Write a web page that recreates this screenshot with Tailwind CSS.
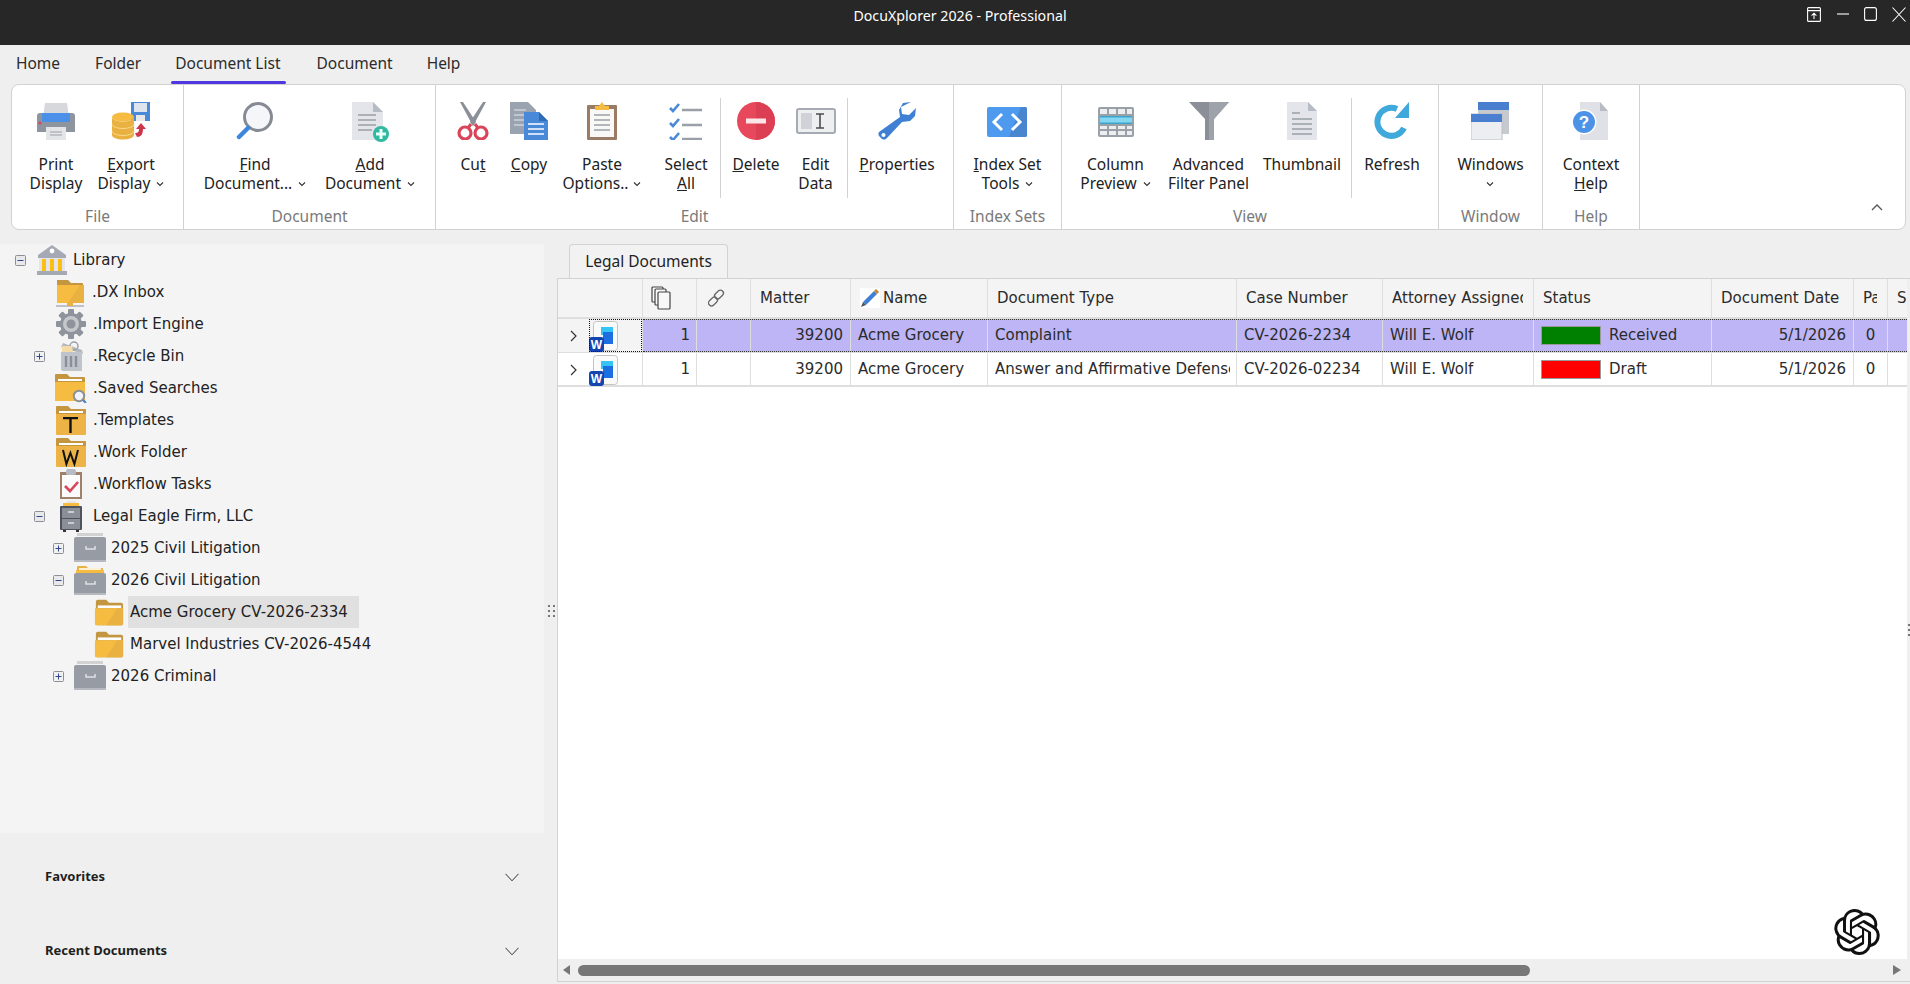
<!DOCTYPE html>
<html lang="en">
<head>
<meta charset="UTF-8">
<title>DocuXplorer 2026 - Professional</title>
<script src="https://cdn.jsdelivr.net/npm/@tailwindcss/browser@4"></script>
</head>
<body class="relative w-[1910px] h-[984px] overflow-hidden bg-[#efefef] font-['Noto_Sans',sans-serif] text-[14px] text-[#1f1f1f]">

<svg class="hidden">
  <symbol id="folder" viewBox="0 0 32 32">
    <path d="M2 5a2 2 0 0 1 2-2h9l3 3h13a2 2 0 0 1 2 2v20a2 2 0 0 1-2 2H3a2 2 0 0 1-1-2z" fill="#c4963f"/>
    <rect x="4" y="9" width="25" height="3" fill="#fff"/>
    <path d="M1 12h30v17a1 1 0 0 1-1 1H2a1 1 0 0 1-1-1z" fill="#f6bc42"/>
    <path d="M31 12v17a1 1 0 0 1-1 1H13L25 12z" fill="#e8b142"/>
  </symbol>
  <symbol id="drawer" viewBox="0 0 32 32">
    <rect x="3" y="1" width="26" height="3" fill="#d2d2d2"/>
    <rect x="0" y="5" width="32" height="25" rx="2" fill="#969ba4"/>
    <rect x="0" y="28" width="32" height="2" fill="#b6bac0"/>
    <path d="M12 14v3h9v-3" fill="none" stroke="#dfe1e4" stroke-width="1.5"/>
  </symbol>
  <symbol id="word" viewBox="0 0 30 32">
    <rect x="4.500" y="1.500" width="24" height="29" rx="3" fill="#fafafa" stroke="#c4c4c4"/>
    <rect x="12" y="7" width="12" height="8" fill="#36c3f5"/>
    <rect x="14" y="12" width="10" height="12" fill="#1b6fe0"/>
    <rect x="0" y="17" width="15" height="15" rx="3" fill="#1444b0"/>
    <text x="7.500" y="29" text-anchor="middle" font-family="Liberation Sans" font-weight="700" font-size="12" fill="#fff">W</text>
  </symbol>
  <symbol id="plus" viewBox="0 0 11 11">
    <rect x=".5" y=".5" width="10" height="10" rx="1" fill="#f1f1f3" stroke="#8e8e96"/>
    <path d="M2.5 5.5h6M5.5 2.5v6" stroke="#2f4a8c"/>
  </symbol>
  <symbol id="minus" viewBox="0 0 11 11">
    <rect x=".5" y=".5" width="10" height="10" rx="1" fill="#e9e9ec" stroke="#8e8e96"/>
    <path d="M2.5 5.5h6" stroke="#2f4a8c"/>
  </symbol>
  <symbol id="chev" viewBox="0 0 8 6">
    <path d="M1 1.5 4 4.5 7 1.5" fill="none" stroke="#333" stroke-width="1.1"/>
  </symbol>
</svg>

<!-- title bar -->
<div class="h-[45px] bg-[#272727] relative flex justify-center pl-[10px] pt-[6px] text-white text-[14.2px] leading-[20px]">
  <span>DocuXplorer 2026 - Professional</span>
  <div class="absolute right-0 top-0 h-[28px] w-[110px] flex items-center">
    <svg class="ml-[7px]" width="14" height="15" viewBox="0 0 14 15" fill="none" stroke="#fff" stroke-width="1.1"><rect x=".6" y=".6" width="12.8" height="13.8" rx="1"/><path d="M.6 3.6h12.8M7 12V6.5M4.6 8.6 7 6.2l2.4 2.4"/></svg>
    <svg class="ml-[15px]" width="14" height="14" viewBox="0 0 14 14" stroke="#fff" stroke-width="1.1"><path d="M1 7h12"/></svg>
    <svg class="ml-[14px]" width="13" height="14" viewBox="0 0 13 14" fill="none" stroke="#fff" stroke-width="1.1"><rect x=".6" y=".6" width="11.8" height="12.8" rx="2"/></svg>
    <svg class="ml-[15px]" width="14" height="15" viewBox="0 0 14 15" stroke="#fff" stroke-width="1.1"><path d="M.5.5 13.5 14.5M13.5.5.5 14.5"/></svg>
  </div>
</div>

<!-- menu tabs -->
<div class="h-[39px] relative flex text-[15.5px] leading-[36px] text-[#2b2b2b]">
  <span class="ml-[16px]">Home</span>
  <span class="ml-[35px]">Folder</span>
  <span class="ml-[34px]">Document List</span>
  <span class="ml-[36px]">Document</span>
  <span class="ml-[34px]">Help</span>
  <div class="absolute left-[171px] top-[36px] w-[115px] h-[3px] rounded-sm bg-[#5038e0]"></div>
</div>

<!-- ribbon -->
<div class="relative ml-[11px] w-[1895px] h-[146px] bg-white border border-[#d2d2d2] rounded-[8px] flex text-[15.5px] leading-[19px] text-[#222]">

  <!-- File -->
  <div class="w-[172px] border-r border-[#d2d2d2] flex flex-col">
    <div class="flex h-[122px] pt-[17px]">
      <div class="w-[88px] flex flex-col items-center">
        <svg width="38" height="38" viewBox="0 0 38 38"><path d="M8 1h22l2 14H6z" fill="#d6d8dc"/><path d="M0 14a3 3 0 0 1 3-3h32a3 3 0 0 1 3 3v16H0z" fill="#8f959e"/><path d="M5 11h28v9H5z" fill="#4a90e8"/><circle cx="3" cy="21" r="1.6" fill="#d9455a"/><path d="M9 25h20v13H9z" fill="#e3e5e8"/><path d="M13 30h12M13 33h12" stroke="#9aa0a8"/></svg>
        <div class="mt-[15px] text-center">Print<br>Display</div>
      </div>
      <div class="w-[62px] flex flex-col items-center">
        <svg width="38" height="38" viewBox="0 0 38 38"><rect x="19" y="0" width="19" height="19" fill="#4a88d8"/><rect x="22" y="1" width="13" height="9" fill="#dfe5ee"/><rect x="24" y="13" width="9" height="6" fill="#e8e8e8"/><ellipse cx="11" cy="15" rx="11" ry="4.5" fill="#f6bc42"/><path d="M0 15v18c0 2.500 5 4.500 11 4.500S22 35.500 22 33V15c0 2.500-5 4.500-11 4.500S0 17.500 0 15z" fill="#e8b142"/><path d="M0 22c0 2.500 5 4.500 11 4.500S22 24.500 22 22M0 29c0 2.500 5 4.500 11 4.500S22 31.500 22 29" fill="none" stroke="#f9d98a"/><path d="M25 35c4 0 6-3 6-8h3l-5-6-5 6h3c0 3-1 4-4 4z" fill="#d0364b"/></svg>
        <div class="mt-[15px] text-center whitespace-nowrap"><u>E</u>xport<br>Display <svg class="inline w-[8px] h-[6px] ml-[2px] mb-[2px]"><use href="#chev"/></svg></div>
      </div>
    </div>
    <div class="text-center text-[#7a7a7a] leading-[18px]">File</div>
  </div>

  <!-- Document -->
  <div class="w-[252px] border-r border-[#d2d2d2] flex flex-col">
    <div class="flex h-[122px] pt-[17px]">
      <div class="w-[142px] flex flex-col items-center">
        <svg width="38" height="38" viewBox="0 0 38 38"><circle cx="22" cy="15" r="13.500" fill="#f4f6fa" stroke="#868b93" stroke-width="3"/><path d="M12 26 3 35" stroke="#3d86dd" stroke-width="4.500" stroke-linecap="round"/></svg>
        <div class="mt-[15px] text-center whitespace-nowrap"><u>F</u>ind<br>Document... <svg class="inline w-[8px] h-[6px] ml-[2px] mb-[2px]"><use href="#chev"/></svg></div>
      </div>
      <div class="w-[88px] flex flex-col items-center">
        <svg width="38" height="40" viewBox="0 0 38 40"><path d="M1 0h21l10 10v28H1z" fill="#e3e5ea"/><path d="M22 0l10 10H22z" fill="#b6bbc4"/><path d="M7 13h18M7 18h18M7 23h18M7 28h14" stroke="#9aa0a8" stroke-width="1.500"/><circle cx="30" cy="32" r="8" fill="#30b8a0"/><path d="M30 27v10M25 32h10" stroke="#e8fff9" stroke-width="3"/></svg>
        <div class="mt-[13px] text-center whitespace-nowrap"><u>A</u>dd<br>Document <svg class="inline w-[8px] h-[6px] ml-[2px] mb-[2px]"><use href="#chev"/></svg></div>
      </div>
    </div>
    <div class="text-center text-[#7a7a7a] leading-[18px]">Document</div>
  </div>

  <!-- Edit -->
  <div class="w-[518px] border-r border-[#d2d2d2] flex flex-col">
    <div class="flex h-[122px] pt-[17px]">
      <div class="w-[74px] flex flex-col items-center">
        <svg width="32" height="38" viewBox="0 0 32 38"><path d="M3 0 16 24l3-4L6 0z" fill="#8b9098"/><path d="M29 0 16 24l-3-4L26 0z" fill="#8b9098"/><ellipse cx="8" cy="31" rx="6" ry="6" fill="none" stroke="#d9455a" stroke-width="3.200"/><ellipse cx="24" cy="31" rx="6" ry="6" fill="none" stroke="#d9455a" stroke-width="3.200"/><path d="M11 26l3-4M21 26l-3-4" stroke="#d9455a" stroke-width="3"/></svg>
        <div class="mt-[15px] text-center">Cu<u>t</u></div>
      </div>
      <div class="w-[38px] flex flex-col items-center">
        <svg width="38" height="38" viewBox="0 0 38 38" class="shrink-0"><path d="M0 0h18l8 8v24H0z" fill="#9aa3b0"/><path d="M4 8h12M4 13h12M4 18h12M4 23h12" stroke="#e8eaee"/><path d="M14 10h15l9 9v19H14z" fill="#4a88d8"/><path d="M29 10l9 9h-9z" fill="#2f6bb8"/><path d="M18 22h16M18 27h16M18 32h16" stroke="#cfe1f8" stroke-width="2"/></svg>
        <div class="mt-[15px] text-center"><u>C</u>opy</div>
      </div>
      <div class="w-[108px] flex flex-col items-center">
        <svg width="32" height="38" viewBox="0 0 32 38"><rect x="1" y="3" width="30" height="35" rx="1" fill="#9a7b66"/><rect x="4" y="7" width="24" height="28" fill="#f8f8f6"/><path d="M8 13h16M8 18h16M8 23h16M8 28h16" stroke="#9aa0a8" stroke-width="1.500"/><path d="M9 8V4h4l3-4 3 4h4v4z" fill="#f6bc42"/></svg>
        <div class="mt-[15px] text-center whitespace-nowrap">Paste<br>Options.. <svg class="inline w-[8px] h-[6px] ml-[1px] mb-[2px]"><use href="#chev"/></svg></div>
      </div>
      <div class="w-[60px] flex flex-col items-center">
        <svg width="34" height="38" viewBox="0 0 34 38" fill="none"><path d="M1 6l3 3 6-7M1 21l3 3 6-7M1 35l3 3 6-7" stroke="#4a88d8" stroke-width="2.600"/><path d="M13 8h20M13 23h20M13 37h20" stroke="#9aa0a8" stroke-width="2.400"/></svg>
        <div class="mt-[15px] text-center">Select<br><u>A</u>ll</div>
      </div>
      <div class="w-px h-[100px] -mt-[4px] ml-[4px] bg-[#d2d2d2]"></div>
      <div class="w-[70px] flex flex-col items-center">
        <svg width="38" height="38" viewBox="0 0 38 38"><circle cx="19" cy="19" r="19" fill="#e8485c"/><path d="M19 0a19 19 0 0 1 0 38z" fill="#dc3f53"/><rect x="9" y="16.500" width="20" height="5" fill="#fbe7ea"/></svg>
        <div class="mt-[15px] text-center"><u>D</u>elete</div>
      </div>
      <div class="w-[49px] flex flex-col items-center">
        <svg width="40" height="38" viewBox="0 0 40 38"><rect x="1" y="7" width="38" height="24" rx="2" fill="#eeeff1" stroke="#a6abb3" stroke-width="2"/><rect x="5" y="11" width="11" height="16" fill="#cfd2d7"/><path d="M20 12h8M20 26h8M24 12v14" stroke="#4d4d4d" stroke-width="1.600"/></svg>
        <div class="mt-[15px] text-center">Edit<br>Data</div>
      </div>
      <div class="w-px h-[100px] -mt-[4px] ml-[7px] bg-[#d2d2d2]"></div>
      <div class="w-[98px] flex flex-col items-center">
        <svg width="38" height="38" viewBox="0 0 38 38"><path d="M33 0 25 1 21 8l1 7L1 30a4 4 0 0 0 0 4l3 3a4 4 0 0 0 5-1l15-16 8-1 5-5 1-8-7 7-7-1-1-7z" fill="#3f80d4"/><circle cx="5.500" cy="33" r="2" fill="#fff"/></svg>
        <div class="mt-[15px] text-center"><u>P</u>roperties</div>
      </div>
    </div>
    <div class="text-center text-[#7a7a7a] leading-[18px]">Edit</div>
  </div>

  <!-- Index Sets -->
  <div class="w-[108px] border-r border-[#d2d2d2] flex flex-col">
    <div class="flex h-[122px] pt-[17px] justify-center">
      <div class="flex flex-col items-center">
        <svg class="mt-[5px]" width="40" height="30" viewBox="0 0 40 30"><rect width="40" height="30" rx="2" fill="#4d9aee"/><path d="M22 30 34 0h4a2 2 0 0 1 2 2v26a2 2 0 0 1-2 2z" fill="#4a85cf"/><path d="M15 7 7 15l8 8M25 7l8 8-8 8" fill="none" stroke="#fff" stroke-width="3"/></svg>
        <div class="mt-[18px] text-center whitespace-nowrap"><u>I</u>ndex Set<br>Tools <svg class="inline w-[8px] h-[6px] ml-[2px] mb-[2px]"><use href="#chev"/></svg></div>
      </div>
    </div>
    <div class="text-center text-[#7a7a7a] leading-[18px] whitespace-nowrap">Index Sets</div>
  </div>

  <!-- View -->
  <div class="w-[377px] border-r border-[#d2d2d2] flex flex-col">
    <div class="flex h-[122px] pt-[17px]">
      <div class="w-[107px] flex flex-col items-center">
        <svg class="mt-[5px]" width="36" height="30" viewBox="0 0 36 30"><rect width="36" height="30" rx="2" fill="#9aa0a8"/><path d="M2 2h7v5H2zM11 2h7v5h-7zM20 2h7v5h-7zM29 2h5v5h-5zM2 19h7v3H2zM11 19h7v3h-7zM20 19h7v3h-7zM29 19h5v3h-5zM2 24h7v4H2zM11 24h7v4h-7zM20 24h7v4h-7zM29 24h5v4h-5z" fill="#eceef0"/><rect x="2" y="9" width="32" height="8" fill="#84d6f2"/><path d="M2 9h32v1.500H2zM2 15.500h32V17H2z" fill="#3ba6cc"/></svg>
        <div class="mt-[18px] text-center whitespace-nowrap">Column<br>Preview <svg class="inline w-[8px] h-[6px] ml-[2px] mb-[2px]"><use href="#chev"/></svg></div>
      </div>
      <div class="w-[79px] flex flex-col items-center">
        <svg width="40" height="38" viewBox="0 0 40 38"><path d="M0 0h40L25 17v21h-9V17z" fill="#8b9098"/><path d="M20 0h20L25 17v21h-5z" fill="#9ea3ab"/></svg>
        <div class="mt-[15px] text-center whitespace-nowrap">Advanced<br>Filter Panel</div>
      </div>
      <div class="ml-[5px] w-[98px] flex flex-col items-center">
        <svg width="30" height="38" viewBox="0 0 30 38"><path d="M0 0h21l9 9v29H0z" fill="#e3e5ea"/><path d="M21 0l9 9h-9z" fill="#b6bbc4"/><path d="M5 11h8M5 17h20M5 22h20M5 27h20M5 32h20" stroke="#9aa0a8" stroke-width="1.300"/></svg>
        <div class="mt-[15px] text-center">Thumbnail</div>
      </div>
      <div class="w-px h-[100px] -mt-[4px] bg-[#d2d2d2]"></div>
      <div class="w-[80px] flex flex-col items-center">
        <svg width="38" height="38" viewBox="0 0 38 38"><path d="M31 26a14 14 0 1 1-7-19" fill="none" stroke="#3fa9dc" stroke-width="6"/><path d="M22 16 36 0v16z" fill="#3fa9dc"/></svg>
        <div class="mt-[15px] text-center">Refresh</div>
      </div>
    </div>
    <div class="text-center text-[#7a7a7a] leading-[18px]">View</div>
  </div>

  <!-- Window -->
  <div class="w-[104px] border-r border-[#d2d2d2] flex flex-col">
    <div class="flex h-[122px] pt-[17px] justify-center">
      <div class="flex flex-col items-center">
        <svg width="38" height="38" viewBox="0 0 38 38"><rect x="7" y="0" width="31" height="32" fill="#c6c9ce"/><rect x="7" y="0" width="31" height="8" fill="#4a7fd0"/><rect x="0" y="12" width="31" height="26" fill="#eceef1" stroke="#bcc0c6"/><rect x="0" y="12" width="31" height="8" fill="#4a7fd0"/></svg>
        <div class="mt-[15px] text-center">Windows<br><svg class="inline w-[8px] h-[6px] mb-[2px]"><use href="#chev"/></svg></div>
      </div>
    </div>
    <div class="text-center text-[#7a7a7a] leading-[18px]">Window</div>
  </div>

  <!-- Help -->
  <div class="w-[97px] border-r border-[#d2d2d2] flex flex-col">
    <div class="flex h-[122px] pt-[17px] justify-center">
      <div class="flex flex-col items-center">
        <svg width="38" height="38" viewBox="0 0 38 38"><path d="M8 0h20l8 9v29H8z" fill="#dfe1e6"/><path d="M28 0l8 9h-8z" fill="#b6bbc4"/><circle cx="12" cy="20" r="12.500" fill="#fff"/><circle cx="12" cy="20" r="11" fill="#4c93e8"/><text x="12" y="26" text-anchor="middle" font-family="Liberation Sans" font-weight="700" font-size="17" fill="#fff">?</text></svg>
        <div class="mt-[15px] text-center">Context<br><u>H</u>elp</div>
      </div>
    </div>
    <div class="text-center text-[#7a7a7a] leading-[18px]">Help</div>
  </div>

  <svg class="absolute right-[22px] top-[118px]" width="12" height="8" viewBox="0 0 12 8"><path d="M1 7l5-5 5 5" fill="none" stroke="#555" stroke-width="1.300"/></svg>
</div>

<!-- body -->
<div class="flex mt-[14px] h-[740px]">
  <!-- left side -->
  <div class="w-[544px] shrink-0">
    <div class="h-[589px] bg-[#f4f4f4] font-['DejaVu_Sans',sans-serif] text-[15px] text-[#222] flex flex-col">

      <div class="h-[32px] flex items-center">
        <svg class="ml-[15px] w-[11px] h-[11px]"><use href="#minus"/></svg>
        <svg class="ml-[10px]" width="32" height="32" viewBox="0 0 32 32"><path d="M16 1 2 11v3h28v-3z" fill="#a4a9b3"/><circle cx="16" cy="7" r="2.400" fill="#fff"/><path d="M3 14h26v13H3z" fill="#e3e5ea"/><path d="M6 15h4v12H6zM14 15h4v12h-4zM22 15h4v12h-4z" fill="#fbbf14"/><rect x="1" y="27" width="30" height="4" fill="#a4a9b3"/></svg>
        <span class="ml-[5px]">Library</span>
      </div>
      <div class="h-[32px] flex items-center pl-[56px]">
        <svg width="28" height="30" viewBox="0 0 28 30"><path d="M1 3h11l3 3h11a1 1 0 0 1 1 1v19H1z" fill="#c4963f"/><path d="M1 8h27v17a1 1 0 0 1-1 1H1z" fill="#f6bc42"/><path d="M28 8v17a1 1 0 0 1-1 1H12L24 8z" fill="#e8b142"/><path d="M0 29h28" stroke="#aab" stroke-width="1.400"/><rect x="11" y="26" width="6" height="3" fill="#e8b142"/></svg>
        <span class="ml-[8px]">.DX Inbox</span>
      </div>
      <div class="h-[32px] flex items-center pl-[56px]">
        <svg width="30" height="30" viewBox="0 0 30 30"><g fill="#8f949c"><circle cx="15" cy="15" r="11"/><rect x="12" y="0" width="6" height="30" rx="1"/><rect x="12" y="0" width="6" height="30" rx="1" transform="rotate(45 15 15)"/><rect x="12" y="0" width="6" height="30" rx="1" transform="rotate(90 15 15)"/><rect x="12" y="0" width="6" height="30" rx="1" transform="rotate(135 15 15)"/></g><circle cx="15" cy="15" r="8" fill="#c4c7cc"/><circle cx="15" cy="15" r="4.500" fill="#8f949c"/></svg>
        <span class="ml-[7px]">.Import Engine</span>
      </div>
      <div class="h-[32px] flex items-center">
        <svg class="ml-[34px] w-[11px] h-[11px]"><use href="#plus"/></svg>
        <svg class="ml-[14px]" width="26" height="30" viewBox="0 0 26 30"><path d="M2 6 24 13 23 9 4 2z" fill="#b4b8bf"/><circle cx="15" cy="5" r="4" fill="none" stroke="#9aa0a8" stroke-width="1.500"/><path d="M3 5h10l1 6H3z" fill="#f3dca8"/><path d="M2 11h21v18a1 1 0 0 1-1 1H4a2 2 0 0 1-2-2z" fill="#bfc3ca"/><path d="M7 15v11M12 15v11M17 15v11" stroke="#8b9098" stroke-width="2.400"/></svg>
        <span class="ml-[8px]">.Recycle Bin</span>
      </div>
      <div class="h-[32px] flex items-center pl-[55px]">
        <svg width="32" height="30" viewBox="0 0 32 30"><path d="M0 2a1 1 0 0 1 1-1h11l3 3h14a1 1 0 0 1 1 1v22H0z" fill="#c4963f"/><rect x="3" y="6" width="24" height="2" fill="#fff"/><path d="M0 9h30v19H0z" fill="#f6bc42"/><circle cx="24" cy="23" r="5.200" fill="#f0f3f7" stroke="#8b9098" stroke-width="2"/><path d="M28 27l3 3" stroke="#3f80d4" stroke-width="2"/></svg>
        <span class="ml-[6px]">.Saved Searches</span>
      </div>
      <div class="h-[32px] flex items-center pl-[56px]">
        <svg width="30" height="30" viewBox="0 0 30 30"><path d="M0 2a1 1 0 0 1 1-1h11l3 3h14a1 1 0 0 1 1 1v24H0z" fill="#c4963f"/><rect x="3" y="6" width="24" height="2" fill="#fff"/><path d="M0 9h30v20a1 1 0 0 1-1 1H1a1 1 0 0 1-1-1z" fill="#edb347"/><path d="M7 12h15v2.200h-6.300V28h-2.400V14.200H7z" fill="#111"/></svg>
        <span class="ml-[7px]">.Templates</span>
      </div>
      <div class="h-[32px] flex items-center pl-[56px]">
        <svg width="30" height="30" viewBox="0 0 30 30"><path d="M0 2a1 1 0 0 1 1-1h11l3 3h14a1 1 0 0 1 1 1v24H0z" fill="#c4963f"/><rect x="3" y="6" width="24" height="2" fill="#fff"/><path d="M0 9h30v20a1 1 0 0 1-1 1H1a1 1 0 0 1-1-1z" fill="#edb347"/><path d="M7 13l3.400 14 4-11 4 11L22 13" fill="none" stroke="#111" stroke-width="2"/></svg>
        <span class="ml-[7px]">.Work Folder</span>
      </div>
      <div class="h-[32px] flex items-center pl-[59px]">
        <svg width="24" height="30" viewBox="0 0 24 30"><rect x="1" y="3" width="22" height="27" fill="#a08068"/><rect x="3" y="6" width="18" height="22" fill="#fbfbfb"/><rect x="7" y="0" width="10" height="6" rx="2" fill="#b7bcc4"/><path d="M6 17l5 5 8-9" fill="none" stroke="#d9455a" stroke-width="2.600"/></svg>
        <span class="ml-[10px]">.Workflow Tasks</span>
      </div>

      <div class="h-[32px] flex items-center">
        <svg class="ml-[34px] w-[11px] h-[11px]"><use href="#minus"/></svg>
        <svg class="ml-[15px]" width="22" height="32" viewBox="0 0 22 32"><path d="M5 5 7 1h9l1 4z" fill="#e6e6e6"/><rect x="3" y="3" width="16" height="4" fill="#f6bc42"/><rect x="0" y="6" width="22" height="24" rx="1" fill="#4f545c"/><rect x="2" y="8" width="18" height="10" fill="#8b9098"/><rect x="2" y="19" width="18" height="10" fill="#8b9098"/><path d="M8 12h6M8 23h6" stroke="#dfe1e4" stroke-width="1.400"/><path d="M3 30h3v2H3zM16 30h3v2h-3z" fill="#333"/></svg>
        <span class="ml-[11px]">Legal Eagle Firm, LLC</span>
      </div>
      <div class="h-[32px] flex items-center">
        <svg class="ml-[53px] w-[11px] h-[11px]"><use href="#plus"/></svg>
        <svg class="ml-[10px] w-[32px] h-[32px]"><use href="#drawer"/></svg>
        <span class="ml-[5px]">2025 Civil Litigation</span>
      </div>
      <div class="h-[32px] flex items-center">
        <svg class="ml-[53px] w-[11px] h-[11px]"><use href="#minus"/></svg>
        <svg class="ml-[10px]" width="32" height="32" viewBox="0 0 32 32"><path d="M3 8V3a1 1 0 0 1 1-1h8l2 2h14a1 1 0 0 1 1 1v3z" fill="#e8b142"/><rect x="5" y="4" width="22" height="3" fill="#fbf0d4"/><rect x="2" y="6" width="28" height="3" fill="#f6bc42"/><rect x="0" y="9" width="32" height="22" rx="2" fill="#969ba4"/><rect x="0" y="29" width="32" height="2" fill="#b6bac0"/><path d="M12 17v3h9v-3" fill="none" stroke="#dfe1e4" stroke-width="1.500"/></svg>
        <span class="ml-[5px]">2026 Civil Litigation</span>
      </div>
      <div class="h-[32px] flex items-center">
        <svg class="ml-[94px] w-[30px] h-[30px]"><use href="#folder"/></svg>
        <span class="ml-[4px] h-[32px] w-[231px] -mt-[1px] pl-[2px] bg-[#e0e0e0] leading-[32px] whitespace-nowrap">Acme Grocery CV-2026-2334</span>
      </div>
      <div class="h-[32px] flex items-center">
        <svg class="ml-[94px] w-[30px] h-[30px]"><use href="#folder"/></svg>
        <span class="ml-[6px]">Marvel Industries CV-2026-4544</span>
      </div>
      <div class="h-[32px] flex items-center">
        <svg class="ml-[53px] w-[11px] h-[11px]"><use href="#plus"/></svg>
        <svg class="ml-[10px] w-[32px] h-[32px]"><use href="#drawer"/></svg>
        <span class="ml-[5px]">2026 Criminal</span>
      </div>
    </div>

    <div class="h-[74px] flex items-center pl-[45px] pr-[25px] font-bold text-[13px] text-[#1f1f1f] mt-[7px]">
      <span class="grow">Favorites</span>
      <svg width="14" height="9" viewBox="0 0 14 9"><path d="M.5.8 7 7.800 13.500.8" fill="none" stroke="#333"/></svg>
    </div>
    <div class="h-[74px] flex items-center pl-[45px] pr-[25px] font-bold text-[13px] text-[#1f1f1f]">
      <span class="grow">Recent Documents</span>
      <svg width="14" height="9" viewBox="0 0 14 9"><path d="M.5.8 7 7.800 13.500.8" fill="none" stroke="#333"/></svg>
    </div>
  </div>

  <!-- splitter -->
  <div class="w-[13px] shrink-0 relative">
    <div class="absolute left-[4px] top-[361px] grid grid-cols-2 gap-x-[3px] gap-y-[3px]">
      <i class="block w-[2px] h-[2px] bg-[#777]"></i><i class="block w-[2px] h-[2px] bg-[#777]"></i>
      <i class="block w-[2px] h-[2px] bg-[#777]"></i><i class="block w-[2px] h-[2px] bg-[#777]"></i>
      <i class="block w-[2px] h-[2px] bg-[#777]"></i><i class="block w-[2px] h-[2px] bg-[#777]"></i>
    </div>
  </div>

  <!-- grid area -->
  <div class="w-[1353px] shrink-0 flex flex-col font-['DejaVu_Sans',sans-serif]">
    <div class="h-[34px] pl-[12px] flex items-end">
      <div class="w-[159px] h-[34px] border border-b-0 border-[#d2d2d2] rounded-t-[4px] bg-[#f2f2f2] font-['Noto_Sans',sans-serif] text-[15.5px] leading-[32px] text-center text-[#222]">Legal Documents</div>
    </div>
    <div class="h-[704px] border border-[#d2d2d2] border-r-0 bg-white flex flex-col relative">
      <div class="grid grid-cols-[85px_54px_54px_100px_137px_249px_146px_151px_178px_142px_34px_19px] w-[1349px] h-[40px] bg-[#f4f4f4] border-b-2 border-[#dedede] text-[15px] text-[#2b2b2b] leading-[38px]">
        <div class="border-r border-[#dedede]"></div>
        <div class="border-r border-[#dedede] flex items-center pl-[8px]">
          <svg width="20" height="24" viewBox="0 0 20 24" fill="#f8f8f8" stroke="#444" stroke-width="1.200"><rect x="1" y="1" width="11" height="15" rx="1"/><rect x="4" y="3" width="11" height="16" rx="1"/><rect x="7" y="6" width="12" height="17" rx="1"/></svg>
        </div>
        <div class="border-r border-[#dedede] flex items-center pl-[9px]">
          <svg width="20" height="20" viewBox="0 0 20 20" fill="none" stroke="#666" stroke-width="1.300"><rect x="10" y="1.500" width="6" height="10" rx="3" transform="rotate(45 13 6.500)"/><rect x="4" y="8.500" width="6" height="10" rx="3" transform="rotate(45 7 13.500)"/></svg>
        </div>
        <div class="border-r border-[#dedede] pl-[9px]">Matter</div>
        <div class="border-r border-[#dedede] pl-[9px] flex items-center gap-[3px]">
          <svg width="20" height="20" viewBox="0 0 20 20"><rect width="20" height="20" fill="#fff"/><path d="M3 14 14 3l3 3L6 17z" fill="#3f80d4"/><path d="M14 3l2-2 3 3-2 2z" fill="#c4832e"/><path d="M3 14l-2 5 5-2z" fill="#555"/></svg>
          <span>Name</span>
        </div>
        <div class="border-r border-[#dedede] pl-[9px]">Document Type</div>
        <div class="border-r border-[#dedede] pl-[9px]">Case Number</div>
        <div class="border-r border-[#dedede] pl-[9px] whitespace-nowrap pr-[10px]"><div class="overflow-hidden">Attorney Assigned</div></div>
        <div class="border-r border-[#dedede] pl-[9px]">Status</div>
        <div class="border-r border-[#dedede] pl-[9px]">Document Date</div>
        <div class="border-r border-[#dedede] pl-[9px] pr-[10px]"><div class="overflow-hidden">Page</div></div>
        <div class="pl-[9px] overflow-hidden">S</div>
      </div>

      <!-- row 1 selected -->
      <div class="grid grid-cols-[85px_54px_54px_100px_137px_249px_146px_151px_178px_142px_34px_19px] w-[1349px] h-[34px] border-b-2 border-[#dedede] text-[15px] text-[#2b2b2b] leading-[32px]">
        <div class="border-r border-[#dedede] bg-[#f4f4f4] flex items-center relative">
          <svg class="ml-[12px]" width="8" height="12" viewBox="0 0 8 12"><path d="M1 1l5 5-5 5" fill="none" stroke="#333" stroke-width="1.200"/></svg>
          <svg class="ml-[11px]" width="30" height="32" viewBox="0 0 30 32"><use href="#word"/></svg>
          <div class="absolute right-0 top-0 bottom-0 w-[53px] border border-dotted border-[#111]"></div>
        </div>
        <div class="col-span-11 grid grid-cols-[54px_54px_100px_137px_249px_146px_151px_178px_142px_34px_19px] bg-[#bdb5f5] border-y border-dotted border-[#333] leading-[31px]">
          <div class="border-r border-[#dedede] text-right pr-[6px]">1</div>
          <div class="border-r border-[#dedede]"></div>
          <div class="border-r border-[#dedede] text-right pr-[7px]">39200</div>
          <div class="border-r border-[#dedede] pl-[7px]">Acme Grocery</div>
          <div class="border-r border-[#dedede] pl-[7px]">Complaint</div>
          <div class="border-r border-[#dedede] pl-[7px]">CV-2026-2234</div>
          <div class="border-r border-[#dedede] pl-[7px]">Will E. Wolf</div>
          <div class="border-r border-[#dedede] pl-[7px] flex items-center">
            <span class="w-[60px] h-[19px] bg-[#008000] border border-[#999]"></span><span class="ml-[8px]">Received</span>
          </div>
          <div class="border-r border-[#dedede] text-right pr-[7px]">5/1/2026</div>
          <div class="border-r border-[#dedede] text-center">0</div>
          <div></div>
        </div>
      </div>

      <!-- row 2 -->
      <div class="grid grid-cols-[85px_54px_54px_100px_137px_249px_146px_151px_178px_142px_34px_19px] w-[1349px] h-[34px] border-b-2 border-[#dedede] text-[15px] text-[#2b2b2b] leading-[33px]">
        <div class="border-r border-[#dedede] flex items-center">
          <svg class="ml-[12px]" width="8" height="12" viewBox="0 0 8 12"><path d="M1 1l5 5-5 5" fill="none" stroke="#333" stroke-width="1.200"/></svg>
          <svg class="ml-[11px]" width="30" height="32" viewBox="0 0 30 32"><use href="#word"/></svg>
        </div>
        <div class="border-r border-[#dedede] text-right pr-[6px]">1</div>
        <div class="border-r border-[#dedede]"></div>
        <div class="border-r border-[#dedede] text-right pr-[7px]">39200</div>
        <div class="border-r border-[#dedede] pl-[7px]">Acme Grocery</div>
        <div class="border-r border-[#dedede] pl-[7px] pr-[6px] whitespace-nowrap"><div class="overflow-hidden">Answer and Affirmative Defense</div></div>
        <div class="border-r border-[#dedede] pl-[7px]">CV-2026-02234</div>
        <div class="border-r border-[#dedede] pl-[7px]">Will E. Wolf</div>
        <div class="border-r border-[#dedede] pl-[7px] flex items-center">
          <span class="w-[60px] h-[19px] bg-[#ff0000] border border-[#999]"></span><span class="ml-[8px]">Draft</span>
        </div>
        <div class="border-r border-[#dedede] text-right pr-[7px]">5/1/2026</div>
        <div class="border-r border-[#dedede] text-center">0</div>
        <div></div>
      </div>

      <!-- horizontal scrollbar -->
      <div class="absolute left-0 right-[3px] bottom-0 h-[22px] bg-[#efefef] flex items-center">
        <svg class="ml-[5px]" width="7" height="10" viewBox="0 0 7 10"><path d="M7 0v10L0 5z" fill="#777"/></svg>
        <div class="ml-[8px] w-[952px] h-[11px] rounded-full bg-[#777]"></div>
        <svg class="ml-auto mr-[6px]" width="8" height="10" viewBox="0 0 8 10"><path d="M0 0v10l8-5z" fill="#777"/></svg>
      </div>
      <div class="absolute right-0 top-0 bottom-0 w-[3px] bg-[#efefef] flex flex-col justify-center gap-[3px]">
        <i class="block w-[2px] h-[2px] ml-[1px] bg-[#777]"></i><i class="block w-[2px] h-[2px] ml-[1px] bg-[#777]"></i><i class="block w-[2px] h-[2px] ml-[1px] bg-[#777]"></i>
      </div>
    </div>
  </div>
</div>

<!-- watermark -->
<svg class="absolute left-[1834px] top-[909px]" width="46" height="46" viewBox="0 0 24 24" fill="#111"><path d="M22.2819 9.8211a5.9847 5.9847 0 0 0-.5157-4.9108 6.0462 6.0462 0 0 0-6.5098-2.9A6.0651 6.0651 0 0 0 4.9807 4.1818a5.9847 5.9847 0 0 0-3.9977 2.9 6.0462 6.0462 0 0 0 .7427 7.0966 5.98 5.98 0 0 0 .511 4.9107 6.051 6.051 0 0 0 6.5146 2.9001A5.9847 5.9847 0 0 0 13.2599 24a6.0557 6.0557 0 0 0 5.7718-4.2058 5.9894 5.9894 0 0 0 3.9977-2.9001 6.0557 6.0557 0 0 0-.7475-7.0729zm-9.022 12.6081a4.4755 4.4755 0 0 1-2.8764-1.0408l.1419-.0804 4.7783-2.7582a.7948.7948 0 0 0 .3927-.6813v-6.7369l2.02 1.1686a.071.071 0 0 1 .038.052v5.5826a4.504 4.504 0 0 1-4.4945 4.4944zm-9.6607-4.1254a4.4708 4.4708 0 0 1-.5346-3.0137l.142.0852 4.783 2.7582a.7712.7712 0 0 0 .7806 0l5.8428-3.3685v2.3324a.0804.0804 0 0 1-.0332.0615L9.74 19.9502a4.4992 4.4992 0 0 1-6.1408-1.6464zM2.3408 7.8956a4.485 4.485 0 0 1 2.3655-1.9728V11.6a.7664.7664 0 0 0 .3879.6765l5.8144 3.3543-2.0201 1.1685a.0757.0757 0 0 1-.071 0l-4.8303-2.7865A4.504 4.504 0 0 1 2.3408 7.872zm16.5963 3.8558L13.1038 8.364 15.1192 7.2a.0757.0757 0 0 1 .071 0l4.8303 2.7913a4.4944 4.4944 0 0 1-.6765 8.1042v-5.6772a.79.79 0 0 0-.407-.667zm2.0107-3.0231l-.142-.0852-4.7735-2.7818a.7759.7759 0 0 0-.7854 0L9.409 9.2297V6.8974a.0662.0662 0 0 1 .0284-.0615l4.8303-2.7866a4.4992 4.4992 0 0 1 6.6802 4.66zM8.3065 12.863l-2.02-1.1638a.0804.0804 0 0 1-.038-.0567V6.0742a4.4992 4.4992 0 0 1 7.3757-3.4537l-.142.0805L8.704 5.459a.7948.7948 0 0 0-.3927.6813zm1.0976-2.3654l2.602-1.4998 2.6069 1.4998v2.9994l-2.5974 1.4997-2.6067-1.4997Z"/></svg>

</body>
</html>
